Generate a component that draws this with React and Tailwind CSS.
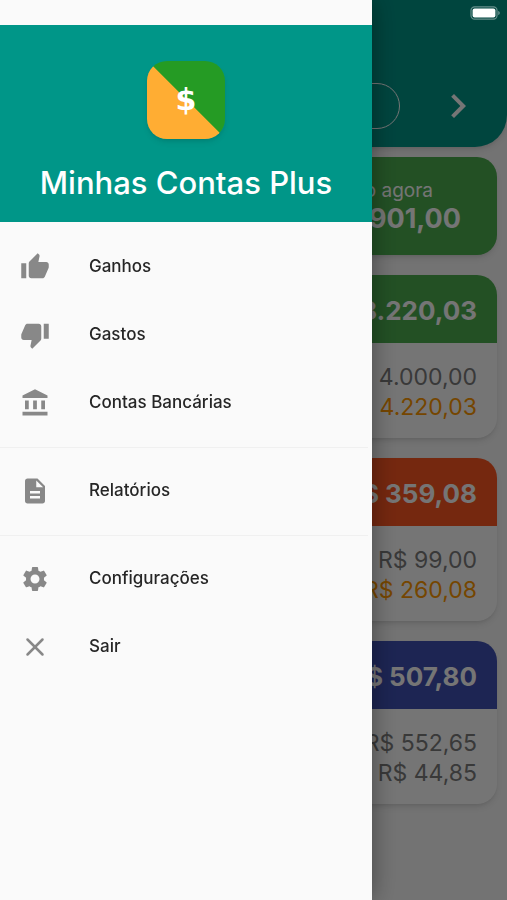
import {
  MdAccountBalance,
  MdChevronLeft,
  MdChevronRight,
  MdDescription,
  MdSettings,
  MdThumbDown,
  MdThumbUp,
} from 'react-icons/md';
import { X } from 'lucide-react';

const MENU_GROUPS = [
  [
    { label: 'Ganhos', href: '#ganhos', icon: MdThumbUp },
    { label: 'Gastos', href: '#gastos', icon: MdThumbDown },
    { label: 'Contas Bancárias', href: '#contas', icon: MdAccountBalance },
  ],
  [{ label: 'Relatórios', href: '#relatorios', icon: MdDescription }],
  [
    { label: 'Configurações', href: '#configuracoes', icon: MdSettings },
    { label: 'Sair', href: '#sair', icon: X },
  ],
];

const CARDS = [
  {
    id: 'ganhos',
    header: 'bg-[#4caf50]',
    total: 'R$ 8.220,03',
    rows: [
      { value: 'R$ 4.000,00', color: 'text-[#7c7c7c]' },
      { value: 'R$ 4.220,03', color: 'text-[#ff9800]' },
    ],
  },
  {
    id: 'gastos',
    header: 'bg-[#ff5722]',
    total: 'R$ 359,08',
    rows: [
      { value: 'R$ 99,00', color: 'text-[#7c7c7c]' },
      { value: 'R$ 260,08', color: 'text-[#ff9800]' },
    ],
  },
  {
    id: 'contas',
    header: 'bg-[#3f51b5]',
    total: 'R$ 507,80',
    rows: [
      { value: 'R$ 552,65', color: 'text-[#7c7c7c]' },
      { value: 'R$ 44,85', color: 'text-[#7c7c7c]' },
    ],
  },
];

function Logo() {
  return (
    <div className="w-[78px] h-[78px] rounded-[20px] overflow-hidden shadow-md bg-[linear-gradient(to_top_right,#ffad33_50%,#259b24_51%)] flex items-center justify-center">
      <span className="font-['DejaVu_Sans',sans-serif] font-bold text-[30px] leading-none text-white">$</span>
    </div>
  );
}

function Battery() {
  return (
    <svg className="w-[30px] h-[14px]" viewBox="0 0 30 14" fill="none">
      <rect x="1" y="0.8" width="26" height="12.4" rx="3.6" stroke="#fff" strokeOpacity="0.4" strokeWidth="1.2" />
      <rect x="2.6" y="2.4" width="22.8" height="9.2" rx="2" fill="#fff" />
      <path d="M28.2 5v4c1-.3 1.6-1.1 1.6-2s-.6-1.7-1.6-2z" fill="#fff" fillOpacity="0.4" />
    </svg>
  );
}

function SummaryCard({ card }) {
  return (
    <section className="rounded-[20px] overflow-hidden bg-white shadow-md">
      <div className={`h-[68px] px-5 pt-[2px] flex items-center justify-end ${card.header}`}>
        <p className="text-[26px] font-bold text-white">{card.total}</p>
      </div>
      <div className="px-5 pt-[19px] pb-4 text-right text-[23px] leading-[30px]">
        {card.rows.map((row) => (
          <p key={row.value} className={row.color}>
            {row.value}
          </p>
        ))}
      </div>
    </section>
  );
}

function Drawer() {
  return (
    <aside className="fixed inset-y-0 left-0 w-[372px] max-w-[80%] bg-[#fafafa] pt-[25px] shadow-[0_0_24px_rgba(0,0,0,0.4)]">
      <div className="bg-[#009688] pt-9 pb-5 flex flex-col items-center gap-6">
        <Logo />
        <h1 className="text-[31px] leading-[39px] font-medium text-white">Minhas Contas Plus</h1>
      </div>

      <nav className="pt-[11px]">
        {MENU_GROUPS.map((group, idx) => (
          <div key={group[0].label}>
            {idx > 0 && <hr className="mt-[10px] mb-[9px] mr-1 border-[#f0f0f0]" />}
            {group.map(({ label, href, icon: Icon }) => (
              <a key={label} href={href} className="h-[68px] px-5 flex items-center gap-[39px]">
                <Icon size={30} strokeWidth={label === 'Sair' ? 2 : 0} className="text-[#888888]" />
                <span className="text-[17px] font-medium text-[#262626]">{label}</span>
              </a>
            ))}
          </div>
        ))}
      </nav>
    </aside>
  );
}

export default function App() {
  return (
    <div className="min-h-screen bg-[#fafafa] font-['Inter',sans-serif]">
      <header className="bg-[#009688] rounded-b-[32px] pt-[82px] pb-[17px] px-[25px] flex items-center gap-[34px] shadow-md">
        <button type="button" aria-label="Mês anterior">
          <MdChevronLeft size={48} className="text-white" />
        </button>
        <div className="flex-1 h-[46px] rounded-full border border-white" />
        <button type="button" aria-label="Próximo mês">
          <MdChevronRight size={48} className="text-white" />
        </button>
      </header>

      <main className="px-[10px] pt-[10px] flex flex-col gap-5">
        {/* Current balance */}
        <section className="h-[98px] rounded-[20px] bg-[#4caf50] shadow-md text-white text-right flex flex-col justify-center">
          <p className="pr-16 text-[19px] leading-[26px]">Saldo agora</p>
          <p className="pr-9 text-[27px] leading-[30px] font-bold">R$ 901,00</p>
        </section>

        {CARDS.map((card) => (
          <SummaryCard key={card.id} card={card} />
        ))}
      </main>

      {/* Scrim */}
      <div className="fixed inset-0 bg-black/54" />

      <Drawer />

      <div className="fixed top-[6px] right-[7px]">
        <Battery />
      </div>
    </div>
  );
}
